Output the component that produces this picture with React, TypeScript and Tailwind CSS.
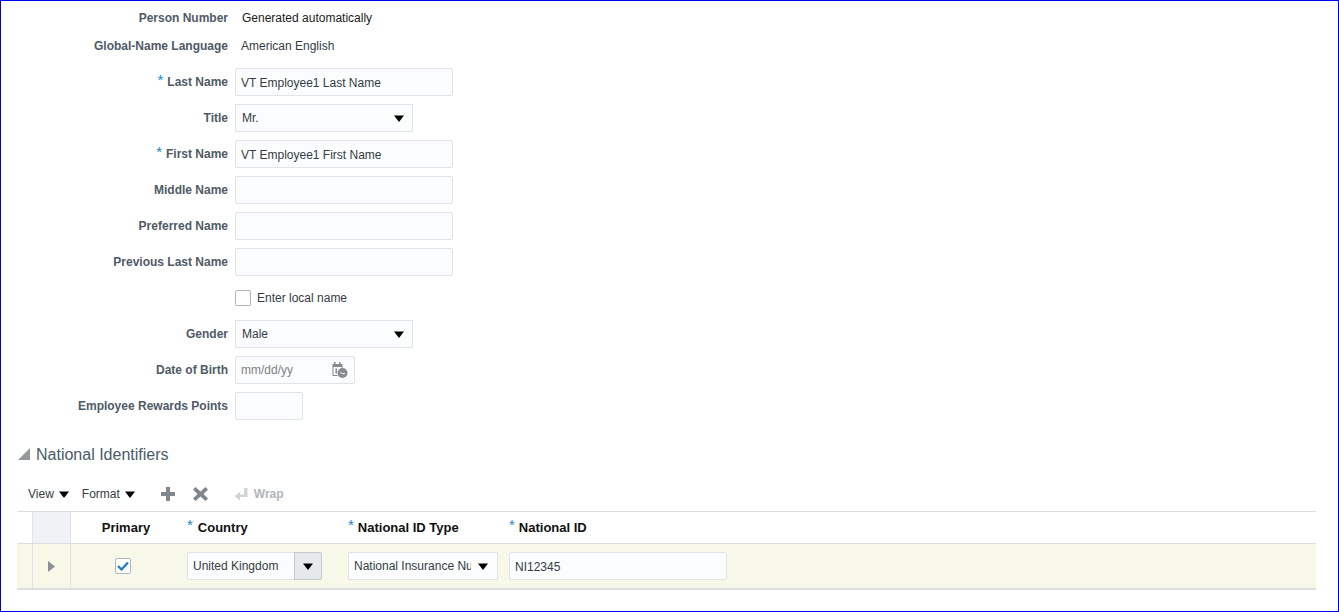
const font = "font-['Liberation_Sans',Arial,sans-serif]";

function Caret({ className = '' }: { className?: string }) {
  return (
    <svg width="10" height="7" viewBox="0 0 10 7" className={className}>
      <path d="M0 0.5h10L5 7z" fill="#000" />
    </svg>
  );
}

function Star({ className = '' }: { className?: string }) {
  return <span className={`text-[15px] font-normal leading-none text-[#1b87c9] ${className}`}>*</span>;
}

function Row({ label, required, children, height = 'h-[28px]' }: { label?: string; required?: boolean; children: React.ReactNode; height?: string }) {
  return (
    <div className={`flex items-center ${height}`}>
      <div className="flex w-[227px] items-center justify-end text-xs font-bold text-[#4f5a66]">
        {required && <Star className="mr-[4px] -mt-[6px]" />}
        {label}
      </div>
      <div className="ml-[7px] flex items-center">{children}</div>
    </div>
  );
}

function TextInput({ value = '', width = 'w-[218px]' }: { value?: string; width?: string }) {
  return (
    <div className={`flex h-[28px] items-center rounded-[2px] border border-[#dfe4ea] bg-[#fbfcfd] pl-[5px] pt-[2px] text-xs text-[#333c47] ${width}`}>
      {value}
    </div>
  );
}

function SelectBox({ value }: { value: string }) {
  return (
    <div className="flex h-[28px] w-[178px] items-center justify-between border border-[#dfe4ea] bg-[#fbfcfd] pl-[6px] pr-[8px] text-xs text-[#333c47]">
      {value}
      <Caret />
    </div>
  );
}

function CalendarIcon() {
  return (
    <svg width="18" height="18" viewBox="0 0 18 18">
      <path d="M1.500 3h10v9h-1V6h-8v8h4v1h-5z" fill="#858b90" />
      <rect x="3" y="1" width="1.500" height="3" fill="#858b90" />
      <rect x="8" y="1" width="1.500" height="3" fill="#858b90" />
      <rect x="4.500" y="7.500" width="1.500" height="5" fill="#858b90" />
      <circle cx="11.500" cy="12" r="5" fill="#858b90" />
      <path d="M9.500 11.500l2 1.200h2.500" fill="none" stroke="#fff" strokeWidth="1" />
    </svg>
  );
}

export default function App() {
  return (
    <div className={`h-[612px] w-[1339px] border border-[#0000f0] bg-white ${font}`}>
      {/* Person form */}
      <div className="flex flex-col pt-[3px]">
        <Row label="Person Number">
          <span className="ml-[7px] text-xs text-[#1a1a1a]">Generated automatically</span>
        </Row>
        <Row label="Global-Name Language">
          <span className="ml-[6px] text-xs text-[#333c47]">American English</span>
        </Row>
        <div className="mt-[8px] flex flex-col gap-2">
          <Row label="Last Name" required><TextInput value="VT Employee1 Last Name" /></Row>
          <Row label="Title"><SelectBox value="Mr." /></Row>
          <Row label="First Name" required><TextInput value="VT Employee1 First Name" /></Row>
          <Row label="Middle Name"><TextInput /></Row>
          <Row label="Preferred Name"><TextInput /></Row>
          <Row label="Previous Last Name"><TextInput /></Row>
          <Row>
            <div className="h-4 w-4 rounded-[2px] border border-[#aeb6bf] bg-white" />
            <span className="ml-[6px] text-xs text-[#333c47]">Enter local name</span>
          </Row>
          <Row label="Gender"><SelectBox value="Male" /></Row>
          <Row label="Date of Birth">
            <div className="flex h-[28px] w-[120px] items-center justify-between rounded-[2px] border border-[#dfe4ea] bg-[#fbfcfd] pl-[5px] pr-[5px] text-xs text-[#7b8288]">
              mm/dd/yy
              <CalendarIcon />
            </div>
          </Row>
          <Row label="Employee Rewards Points"><TextInput width="w-[68px]" /></Row>
        </div>
      </div>

      {/* National Identifiers */}
      <div className="mt-[23px] flex items-center pl-[17px]">
        <svg width="12" height="12" viewBox="0 0 12 12" className="-mt-[2px]"><path d="M12 0v12H0z" fill="#93989d" /></svg>
        <span className="ml-[6px] text-base text-[#4a5a68]">National Identifiers</span>
      </div>

      <div className="mt-[15px] flex h-[24px] items-center pl-[27px] text-xs text-[#333c47]">
        <span>View</span>
        <Caret className="ml-[5px]" />
        <span className="ml-[13px]">Format</span>
        <Caret className="ml-[5px]" />
        <svg width="14" height="14" viewBox="0 0 14 14" className="ml-[26px]">
          <path d="M5 0h4v5h5v4H9v5H5V9H0V5h5z" fill="#7f868c" />
        </svg>
        <svg width="15" height="14" viewBox="0 0 15 14" className="ml-[18px]">
          <path d="M2.500 0l5 4.500L12.500 0 15 2.500 10.500 7l4.500 4.500L12.500 14l-5-4.500L2.500 14 0 11.500 4.500 7 0 2.500z" fill="#7f868c" />
        </svg>
        <svg width="14" height="14" viewBox="0 0 14 14" className="ml-[26px]">
          <path d="M10 1h3.500v9H6v3.500L0.500 9 6 5v2.500h4z" fill="#cfd3d7" />
        </svg>
        <span className="ml-[6px] font-bold text-[#b0b5ba]">Wrap</span>
      </div>

      <div className="ml-[16px] mt-[5px] w-[1299px] border-t border-[#d9dee4]">
        {/* Header */}
        <div className="flex h-[32px] border-b border-[#d9dee4] text-[13px] font-bold text-[#111]">
          <div className="w-[16px] border-r border-[#dfe4ea]" />
          <div className="w-[38px] border-r border-[#dfe4ea] bg-[#f0f2f5]" />
          <div className="flex w-[110px] items-center justify-center">Primary</div>
          <div className="flex w-[161px] items-center pl-[6px]">
            <Star className="mr-[5px] -mt-[6px]" />Country
          </div>
          <div className="flex w-[161px] items-center pl-[6px]">
            <Star className="mr-[4px] -mt-[6px]" />National ID Type
          </div>
          <div className="flex items-center pl-[6px]">
            <Star className="mr-[4px] -mt-[6px]" />National ID
          </div>
        </div>
        {/* Data row */}
        <div className="flex h-[46px] items-center border-b-2 border-[#dcdfe3] bg-[#f7f8e8] text-xs text-[#333c47]">
          <div className="h-full w-[16px] border-r border-[#dfe4ea]" />
          <div className="flex h-full w-[38px] items-center justify-center border-r border-[#dfe4ea]">
            <svg width="7" height="11" viewBox="0 0 7 11"><path d="M0 0l7 5.500L0 11z" fill="#8a9096" /></svg>
          </div>
          <div className="flex w-[110px] items-center justify-center">
            <div className="flex h-4 w-4 -translate-x-[3px] items-center justify-center rounded-[2px] border border-[#aeb6bf] bg-white">
              <svg width="12" height="10" viewBox="0 0 12 10">
                <path d="M1 5l3.500 3.500L11 1.500" fill="none" stroke="#1479d0" strokeWidth="2.200" />
              </svg>
            </div>
          </div>
          <div className="w-[161px] pl-[6px]">
            <div className="flex h-[28px] w-[135px] items-center justify-between rounded-[2px] border border-[#dfe4ea] bg-[#fbfcfd] pl-[5px]">
              United Kingdom
              <div className="-mr-px flex h-[28px] w-[28px] items-center justify-center rounded-r-[2px] border border-[#c4cad0] bg-[#e6e9ec]">
                <Caret />
              </div>
            </div>
          </div>
          <div className="w-[161px] pl-[6px]">
            <div className="flex h-[28px] w-[150px] items-center justify-between border border-[#dfe4ea] bg-[#fbfcfd] pl-[5px] pr-[9px]">
              <span className="w-[117px] overflow-hidden whitespace-nowrap">National Insurance Number</span>
              <Caret />
            </div>
          </div>
          <div className="pl-[6px]">
            <TextInput value="NI12345" />
          </div>
        </div>
      </div>
    </div>
  );
}
